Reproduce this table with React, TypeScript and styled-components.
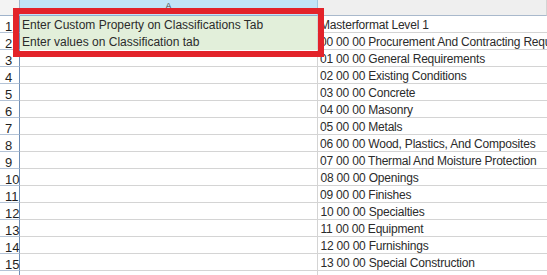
import styled, { createGlobalStyle } from 'styled-components';

const GlobalStyle = createGlobalStyle`
  html, body {
    margin: 0;
    padding: 0;
    background: #ffffff;
    overflow: hidden;
  }
  body {
    font-family: 'Liberation Sans', Arial, sans-serif;
  }
`;

const rows = [
  { id: 1, a: 'Enter Custom Property on Classifications Tab', b: 'Masterformat Level 1' },
  { id: 2, a: 'Enter values on Classification tab', b: '00 00 00 Procurement And Contracting Requirements' },
  { id: 3, b: '01 00 00 General Requirements' },
  { id: 4, b: '02 00 00 Existing Conditions' },
  { id: 5, b: '03 00 00 Concrete' },
  { id: 6, b: '04 00 00 Masonry' },
  { id: 7, b: '05 00 00 Metals' },
  { id: 8, b: '06 00 00 Wood, Plastics, And Composites' },
  { id: 9, b: '07 00 00 Thermal And Moisture Protection' },
  { id: 10, b: '08 00 00 Openings' },
  { id: 11, b: '09 00 00 Finishes' },
  { id: 12, b: '10 00 00 Specialties' },
  { id: 13, b: '11 00 00 Equipment' },
  { id: 14, b: '12 00 00 Furnishings' },
  { id: 15, b: '13 00 00 Special Construction' },
];

export default function App() {
  return (
    <>
      <GlobalStyle />
      <Sheet>
        <HeaderRow>
          <Corner />
          <ColHeader $selected>A</ColHeader>
          <ColHeader />
        </HeaderRow>
        {rows.map((row) => (
          <Row key={row.id}>
            <RowHeader>{row.id}</RowHeader>
            <CellA $filled={!!row.a}>{row.a}</CellA>
            <CellB>{row.b}</CellB>
          </Row>
        ))}
        {/* row 16 only peeks in at the bottom edge */}
        <Row>
          <RowHeader />
          <CellA />
          <CellB />
        </Row>
        <Highlight />
      </Sheet>
    </>
  );
}

const Sheet = styled.div`
  position: relative;
  width: 547px;
  height: 275px;
  overflow: hidden;
  font-family: 'Liberation Sans', Arial, sans-serif;
  font-size: 12px;
  color: #2b2b2b;
`;

const HeaderRow = styled.div`
  display: flex;
  height: 16px;
`;

const Corner = styled.div`
  flex: 0 0 20px;
  box-sizing: border-box;
  background: #f3f3f3;
  border-right: 1px solid #9fb3cb;
  border-bottom: 1px solid #9fb3cb;
`;

const ColHeader = styled.div<{ $selected?: boolean }>`
  box-sizing: border-box;
  flex: ${(p) => (p.$selected ? '0 0 298px' : '1 1 auto')};
  background: ${(p) => (p.$selected ? '#c1e4f7' : '#efefef')};
  border-right: 1px solid ${(p) => (p.$selected ? '#9fc7e0' : '#d4d4d4')};
  border-bottom: 1px solid ${(p) => (p.$selected ? '#8fb0cf' : '#a9b9cc')};
  font-size: 9px;
  line-height: 12px;
  text-align: center;
  color: #444444;
`;

const Row = styled.div`
  display: flex;
  height: 17px;
`;

const RowHeader = styled.div`
  flex: 0 0 20px;
  box-sizing: border-box;
  padding-left: 5px;
  background: #ffffff;
  border-right: 1px solid #6f8fb7;
  border-bottom: 1px solid #b4c3d6;
  font-size: 13px;
  line-height: 21px;
  color: #1f1f1f;
`;

const CellA = styled.div<{ $filled?: boolean }>`
  flex: 0 0 298px;
  box-sizing: border-box;
  padding-left: 2px;
  background: ${(p) => (p.$filled ? '#e2efda' : '#ffffff')};
  border-right: 1px solid #d4d4d4;
  border-bottom: 1px solid ${(p) => (p.$filled ? '#e2efda' : '#d4d4d4')};
  line-height: 19px;
  white-space: nowrap;
  overflow: hidden;
`;

const CellB = styled.div`
  flex: 1 1 auto;
  box-sizing: border-box;
  padding-left: 2px;
  border-bottom: 1px solid #d4d4d4;
  line-height: 19px;
  letter-spacing: -0.2px;
  white-space: nowrap;
`;

const Highlight = styled.div`
  position: absolute;
  left: 13px;
  top: 8px;
  width: 311px;
  height: 49px;
  box-sizing: border-box;
  border: 6px solid #e3232a;
  pointer-events: none;
`;
